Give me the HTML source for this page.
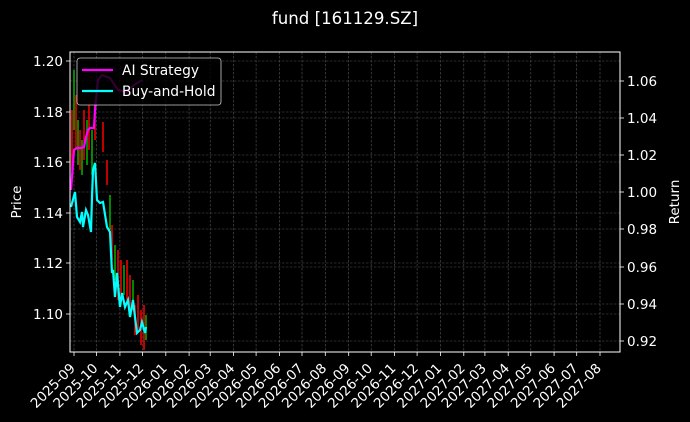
<!DOCTYPE html>
<html><head><meta charset="utf-8"><style>
html,body{margin:0;padding:0;background:#000;}
svg{display:block;font-family:"DejaVu Sans","Liberation Sans",sans-serif;}
</style></head><body>
<svg width="690" height="422" viewBox="0 0 690 422" xmlns="http://www.w3.org/2000/svg">
<rect width="690" height="422" fill="#000"/>
<text x="345" y="24" fill="#fff" font-size="16.6" text-anchor="middle">fund [161129.SZ]</text>
<g stroke="#555" stroke-width="0.6" stroke-dasharray="2.5,1.5">
<line x1="70" x2="620" y1="61" y2="61"/><line x1="70" x2="620" y1="112" y2="112"/><line x1="70" x2="620" y1="162" y2="162"/><line x1="70" x2="620" y1="213" y2="213"/><line x1="70" x2="620" y1="263" y2="263"/><line x1="70" x2="620" y1="314" y2="314"/>
<line x1="70" x2="620" y1="81" y2="81"/><line x1="70" x2="620" y1="118" y2="118"/><line x1="70" x2="620" y1="155" y2="155"/><line x1="70" x2="620" y1="192" y2="192"/><line x1="70" x2="620" y1="229" y2="229"/><line x1="70" x2="620" y1="267" y2="267"/><line x1="70" x2="620" y1="304" y2="304"/><line x1="70" x2="620" y1="341" y2="341"/>
<line y1="52" y2="352" x1="74" x2="74"/><line y1="52" y2="352" x1="96.6" x2="96.6"/><line y1="52" y2="352" x1="119.9" x2="119.9"/><line y1="52" y2="352" x1="142.5" x2="142.5"/><line y1="52" y2="352" x1="165.8" x2="165.8"/><line y1="52" y2="352" x1="189.1" x2="189.1"/><line y1="52" y2="352" x1="210.2" x2="210.2"/><line y1="52" y2="352" x1="233.5" x2="233.5"/><line y1="52" y2="352" x1="256.1" x2="256.1"/><line y1="52" y2="352" x1="279.4" x2="279.4"/><line y1="52" y2="352" x1="302" x2="302"/><line y1="52" y2="352" x1="325.3" x2="325.3"/><line y1="52" y2="352" x1="348.7" x2="348.7"/><line y1="52" y2="352" x1="371.2" x2="371.2"/><line y1="52" y2="352" x1="394.6" x2="394.6"/><line y1="52" y2="352" x1="417.1" x2="417.1"/><line y1="52" y2="352" x1="440.5" x2="440.5"/><line y1="52" y2="352" x1="463.8" x2="463.8"/><line y1="52" y2="352" x1="484.9" x2="484.9"/><line y1="52" y2="352" x1="508.2" x2="508.2"/><line y1="52" y2="352" x1="530.8" x2="530.8"/><line y1="52" y2="352" x1="554.1" x2="554.1"/><line y1="52" y2="352" x1="576.7" x2="576.7"/><line y1="52" y2="352" x1="600" x2="600"/>
</g>
<g stroke-width="1.6">
<line x1="72" y1="110" x2="72" y2="170" stroke="#e00"/><line x1="74" y1="70" x2="74" y2="130" stroke="#0a0"/><line x1="76" y1="95" x2="76" y2="150" stroke="#e00"/><line x1="78" y1="120" x2="78" y2="165" stroke="#0a0"/><line x1="80" y1="130" x2="80" y2="170" stroke="#e00"/><line x1="82" y1="140" x2="82" y2="175" stroke="#0a0"/><line x1="84" y1="110" x2="84" y2="160" stroke="#e00"/><line x1="87" y1="120" x2="87" y2="165" stroke="#0a0"/><line x1="89" y1="105" x2="89" y2="150" stroke="#e00"/><line x1="92" y1="130" x2="92" y2="175" stroke="#0a0"/><line x1="95" y1="100" x2="95" y2="140" stroke="#e00"/><line x1="103" y1="122" x2="103" y2="152" stroke="#e00"/><line x1="107" y1="160" x2="107" y2="185" stroke="#e00"/><line x1="110" y1="195" x2="110" y2="230" stroke="#0a0"/><line x1="112" y1="225" x2="112" y2="260" stroke="#e00"/><line x1="115" y1="245" x2="115" y2="280" stroke="#0a0"/><line x1="118" y1="250" x2="118" y2="300" stroke="#e00"/><line x1="121" y1="260" x2="121" y2="300" stroke="#e00"/><line x1="124" y1="265" x2="124" y2="295" stroke="#0a0"/><line x1="127" y1="260" x2="127" y2="300" stroke="#e00"/><line x1="130" y1="275" x2="130" y2="315" stroke="#e00"/><line x1="133" y1="280" x2="133" y2="310" stroke="#0a0"/><line x1="135" y1="305" x2="135" y2="335" stroke="#e00"/><line x1="138" y1="295" x2="138" y2="330" stroke="#e00"/><line x1="141" y1="310" x2="141" y2="345" stroke="#e00"/><line x1="144" y1="305" x2="144" y2="350" stroke="#e00"/><line x1="146" y1="315" x2="146" y2="340" stroke="#0a0"/>
</g>
<polyline fill="none" stroke="#f0f" stroke-width="2.2" points="71,190 74,150 77,148 81,148 84,147 86,137 88,130 90,128 94,128 95,110 96,100 98,80 102,75 110,78 118,90 126,92 134,85 142,80"/>
<polyline fill="none" stroke="#0ff" stroke-width="2.2" points="71,207 75,192 77,217 80,222 82,212 83,227 86,210 88,215 91,232 92,197 93,170 95,163 97,200 100,203 103,202 107,227 110,232 112,273 113,270 115,297 117,273 120,307 122,293 125,307 128,300 130,317 133,300 135,317 137,333 140,330 142,322 145,333 146,327"/>
<rect x="77" y="58" width="144" height="47" rx="3" fill="#000" fill-opacity="0.8" stroke="#ccc" stroke-width="0.8"/>
<line x1="82" y1="70" x2="113" y2="70" stroke="#f0f" stroke-width="2.2"/>
<line x1="82" y1="91" x2="113" y2="91" stroke="#0ff" stroke-width="2.2"/>
<text x="122" y="75" fill="#fff" font-size="13.8">AI Strategy</text>
<text x="122" y="96" fill="#fff" font-size="13.8">Buy-and-Hold</text>
<rect x="70" y="52" width="550" height="300" fill="none" stroke="#fff" stroke-width="1"/>
<g stroke="#fff" stroke-width="0.8">
<line x1="66" x2="70" y1="61" y2="61"/><line x1="66" x2="70" y1="112" y2="112"/><line x1="66" x2="70" y1="162" y2="162"/><line x1="66" x2="70" y1="213" y2="213"/><line x1="66" x2="70" y1="263" y2="263"/><line x1="66" x2="70" y1="314" y2="314"/>
<line x1="620" x2="624" y1="81" y2="81"/><line x1="620" x2="624" y1="118" y2="118"/><line x1="620" x2="624" y1="155" y2="155"/><line x1="620" x2="624" y1="192" y2="192"/><line x1="620" x2="624" y1="229" y2="229"/><line x1="620" x2="624" y1="267" y2="267"/><line x1="620" x2="624" y1="304" y2="304"/><line x1="620" x2="624" y1="341" y2="341"/>
</g>
<g fill="#fff" font-size="13.5" text-anchor="end">
<text x="63" y="66">1.20</text><text x="63" y="117">1.18</text><text x="63" y="167">1.16</text><text x="63" y="218">1.14</text><text x="63" y="268">1.12</text><text x="63" y="319">1.10</text>
</g>
<g fill="#fff" font-size="13.5">
<text x="627" y="86">1.06</text><text x="627" y="123">1.04</text><text x="627" y="160">1.02</text><text x="627" y="197">1.00</text><text x="627" y="234">0.98</text><text x="627" y="272">0.96</text><text x="627" y="309">0.94</text><text x="627" y="346">0.92</text>
</g>
<text transform="translate(21,202) rotate(-90)" fill="#fff" font-size="13.5" text-anchor="middle">Price</text>
<text transform="translate(679,202) rotate(-90)" fill="#fff" font-size="13.5" text-anchor="middle">Return</text>
<g fill="#fff" font-size="13.5" text-anchor="end">
<g transform="translate(76,369) rotate(-45)"><text>2025-09</text></g>
<g transform="translate(98.6,369) rotate(-45)"><text>2025-10</text></g>
<g transform="translate(121.9,369) rotate(-45)"><text>2025-11</text></g>
<g transform="translate(144.5,369) rotate(-45)"><text>2025-12</text></g>
<g transform="translate(167.8,369) rotate(-45)"><text>2026-01</text></g>
<g transform="translate(191.1,369) rotate(-45)"><text>2026-02</text></g>
<g transform="translate(212.2,369) rotate(-45)"><text>2026-03</text></g>
<g transform="translate(235.5,369) rotate(-45)"><text>2026-04</text></g>
<g transform="translate(258.1,369) rotate(-45)"><text>2026-05</text></g>
<g transform="translate(281.4,369) rotate(-45)"><text>2026-06</text></g>
<g transform="translate(304,369) rotate(-45)"><text>2026-07</text></g>
<g transform="translate(327.3,369) rotate(-45)"><text>2026-08</text></g>
<g transform="translate(350.7,369) rotate(-45)"><text>2026-09</text></g>
<g transform="translate(373.2,369) rotate(-45)"><text>2026-10</text></g>
<g transform="translate(396.6,369) rotate(-45)"><text>2026-11</text></g>
<g transform="translate(419.1,369) rotate(-45)"><text>2026-12</text></g>
<g transform="translate(442.5,369) rotate(-45)"><text>2027-01</text></g>
<g transform="translate(465.8,369) rotate(-45)"><text>2027-02</text></g>
<g transform="translate(486.9,369) rotate(-45)"><text>2027-03</text></g>
<g transform="translate(510.2,369) rotate(-45)"><text>2027-04</text></g>
<g transform="translate(532.8,369) rotate(-45)"><text>2027-05</text></g>
<g transform="translate(556.1,369) rotate(-45)"><text>2027-06</text></g>
<g transform="translate(578.7,369) rotate(-45)"><text>2027-07</text></g>
<g transform="translate(602,369) rotate(-45)"><text>2027-08</text></g>
</g>
<g stroke="#fff" stroke-width="0.8">
<line y1="352" y2="356" x1="74" x2="74"/><line y1="352" y2="356" x1="96.6" x2="96.6"/><line y1="352" y2="356" x1="119.9" x2="119.9"/><line y1="352" y2="356" x1="142.5" x2="142.5"/><line y1="352" y2="356" x1="165.8" x2="165.8"/><line y1="352" y2="356" x1="189.1" x2="189.1"/><line y1="352" y2="356" x1="210.2" x2="210.2"/><line y1="352" y2="356" x1="233.5" x2="233.5"/><line y1="352" y2="356" x1="256.1" x2="256.1"/><line y1="352" y2="356" x1="279.4" x2="279.4"/><line y1="352" y2="356" x1="302" x2="302"/><line y1="352" y2="356" x1="325.3" x2="325.3"/><line y1="352" y2="356" x1="348.7" x2="348.7"/><line y1="352" y2="356" x1="371.2" x2="371.2"/><line y1="352" y2="356" x1="394.6" x2="394.6"/><line y1="352" y2="356" x1="417.1" x2="417.1"/><line y1="352" y2="356" x1="440.5" x2="440.5"/><line y1="352" y2="356" x1="463.8" x2="463.8"/><line y1="352" y2="356" x1="484.9" x2="484.9"/><line y1="352" y2="356" x1="508.2" x2="508.2"/><line y1="352" y2="356" x1="530.8" x2="530.8"/><line y1="352" y2="356" x1="554.1" x2="554.1"/><line y1="352" y2="356" x1="576.7" x2="576.7"/><line y1="352" y2="356" x1="600" x2="600"/>
</g>
</svg>
</body></html>
